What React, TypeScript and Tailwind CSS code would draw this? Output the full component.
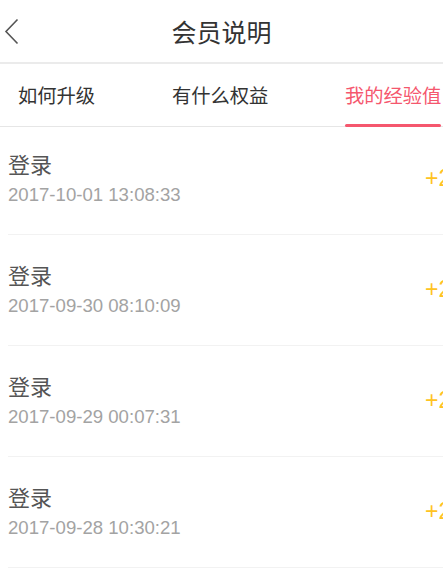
const records = [
  { title: "登录", time: "2017-10-01 13:08:33", value: "+20" },
  { title: "登录", time: "2017-09-30 08:10:09", value: "+20" },
  { title: "登录", time: "2017-09-29 00:07:31", value: "+20" },
  { title: "登录", time: "2017-09-28 10:30:21", value: "+20" },
];

export default function App() {
  return (
    <div className="h-[568px] w-[443px] overflow-hidden bg-white font-['Liberation_Sans','Noto_Sans_CJK_SC',sans-serif]">
      <header className="relative flex h-[62px] items-center justify-center">
        <svg className="absolute left-[4px] top-[18px]" width="16" height="27" viewBox="0 0 16 27" fill="none">
          <path d="M13.5 1.5 2 13.5 13.5 25.5" stroke="#555" strokeWidth="1.6" />
        </svg>
        <h1 className="font-['Noto_Sans_CJK_SC',sans-serif] text-[25px] leading-none text-[#333]">会员说明</h1>
      </header>
      <div className="h-[2px] bg-[#ebebeb]" />

      <nav className="flex h-[63px] border-b border-[#e6e6e6] font-['Noto_Sans_CJK_SC',sans-serif] text-[19.3px] text-[#333]">
        <div className="flex w-[154px] items-center pl-[18px]">如何升级</div>
        <div className="flex w-[173px] items-center pl-[18px]">有什么权益</div>
        <div className="flex items-center whitespace-nowrap pl-[18px] text-[#f5576e]">
          <span className="relative flex h-full items-center">
            我的经验值
            <span className="absolute bottom-[-1px] left-0 right-0 h-[3px] rounded-full bg-[#f5576e]" />
          </span>
        </div>
      </nav>

      <ul className="-mt-[3px]">
        {records.map((r) => (
          <li key={r.time} className="pl-[8px]">
            <div className="flex h-[111px] w-[456px] border-b border-[#f2f2f2]">
              <div className="flex-1 pt-[28px]">
                <div className="font-['Noto_Sans_CJK_SC',sans-serif] text-[22px] leading-none text-[#555]">{r.title}</div>
                <div className="mt-[12px] text-[18.6px] leading-none text-[#a3a3a3]">{r.time}</div>
              </div>
              <div className="shrink-0 pt-[43px] text-[23px] leading-none text-[#ffc322]">{r.value}</div>
            </div>
          </li>
        ))}
      </ul>
    </div>
  );
}
